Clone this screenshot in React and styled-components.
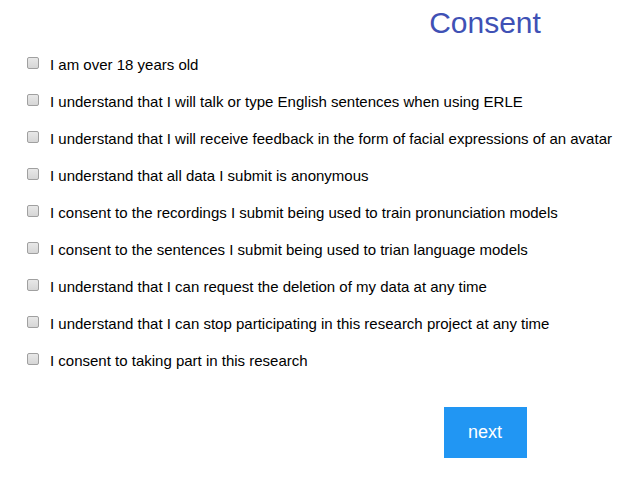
import React, { useState } from "react";
import styled, { createGlobalStyle } from "styled-components";

const GlobalStyle = createGlobalStyle`
  body {
    margin: 0;
    background: #ffffff;
    font-family: "Liberation Sans", Arial, sans-serif;
  }
`;

const Page = styled.div`
  width: 643px;
  height: 478px;
  display: flex;
  flex-direction: column;
`;

const Side = styled.div`
  margin-left: 328px;
  width: 314px;
  display: flex;
  justify-content: center;
`;

const Title = styled.h1`
  margin: 6px 0 0;
  height: 39.5px;
  font-size: 30px;
  font-weight: normal;
  color: #3f51b5;
  line-height: 34px;
`;

const List = styled.div`
  display: flex;
  flex-direction: column;
`;

const Row = styled.label`
  height: 37px;
  display: flex;
  align-items: center;
  gap: 11px;
  padding-left: 27px;
  font-size: 15px;
  color: #000;
  cursor: pointer;
`;

const Box = styled.input`
  appearance: none;
  margin: -2px 0 0;
  width: 12px;
  height: 12px;
  box-sizing: border-box;
  border: 1px solid #a0a0a0;
  border-radius: 2px;
  background: linear-gradient(#e8e8e8, #d6d6d6);
  &:checked {
    background: #2196f3;
    border-color: #1976d2;
  }
`;

const NextButton = styled.button`
  margin-top: 28.5px;
  width: 83px;
  height: 51px;
  border: none;
  background: #2196f3;
  color: #fff;
  font-family: "Liberation Sans", Arial, sans-serif;
  font-size: 18px;
  cursor: pointer;
`;

const items = [
  "I am over 18 years old",
  "I understand that I will talk or type English sentences when using ERLE",
  "I understand that I will receive feedback in the form of facial expressions of an avatar",
  "I understand that all data I submit is anonymous",
  "I consent to the recordings I submit being used to train pronunciation models",
  "I consent to the sentences I submit being used to trian language models",
  "I understand that I can request the deletion of my data at any time",
  "I understand that I can stop participating in this research project at any time",
  "I consent to taking part in this research",
];

export default function App() {
  const [checked, setChecked] = useState(items.map(() => false));

  const toggle = (i) => {
    setChecked(checked.map((c, j) => (j === i ? !c : c)));
  };

  return (
    <>
      <GlobalStyle />
      <Page>
        <Side>
          <Title>Consent</Title>
        </Side>
        <List>
          {items.map((text, i) => (
            <Row key={i}>
              <Box type="checkbox" checked={checked[i]} onChange={() => toggle(i)} />
              {text}
            </Row>
          ))}
        </List>
        <Side>
          <NextButton>next</NextButton>
        </Side>
      </Page>
    </>
  );
}
